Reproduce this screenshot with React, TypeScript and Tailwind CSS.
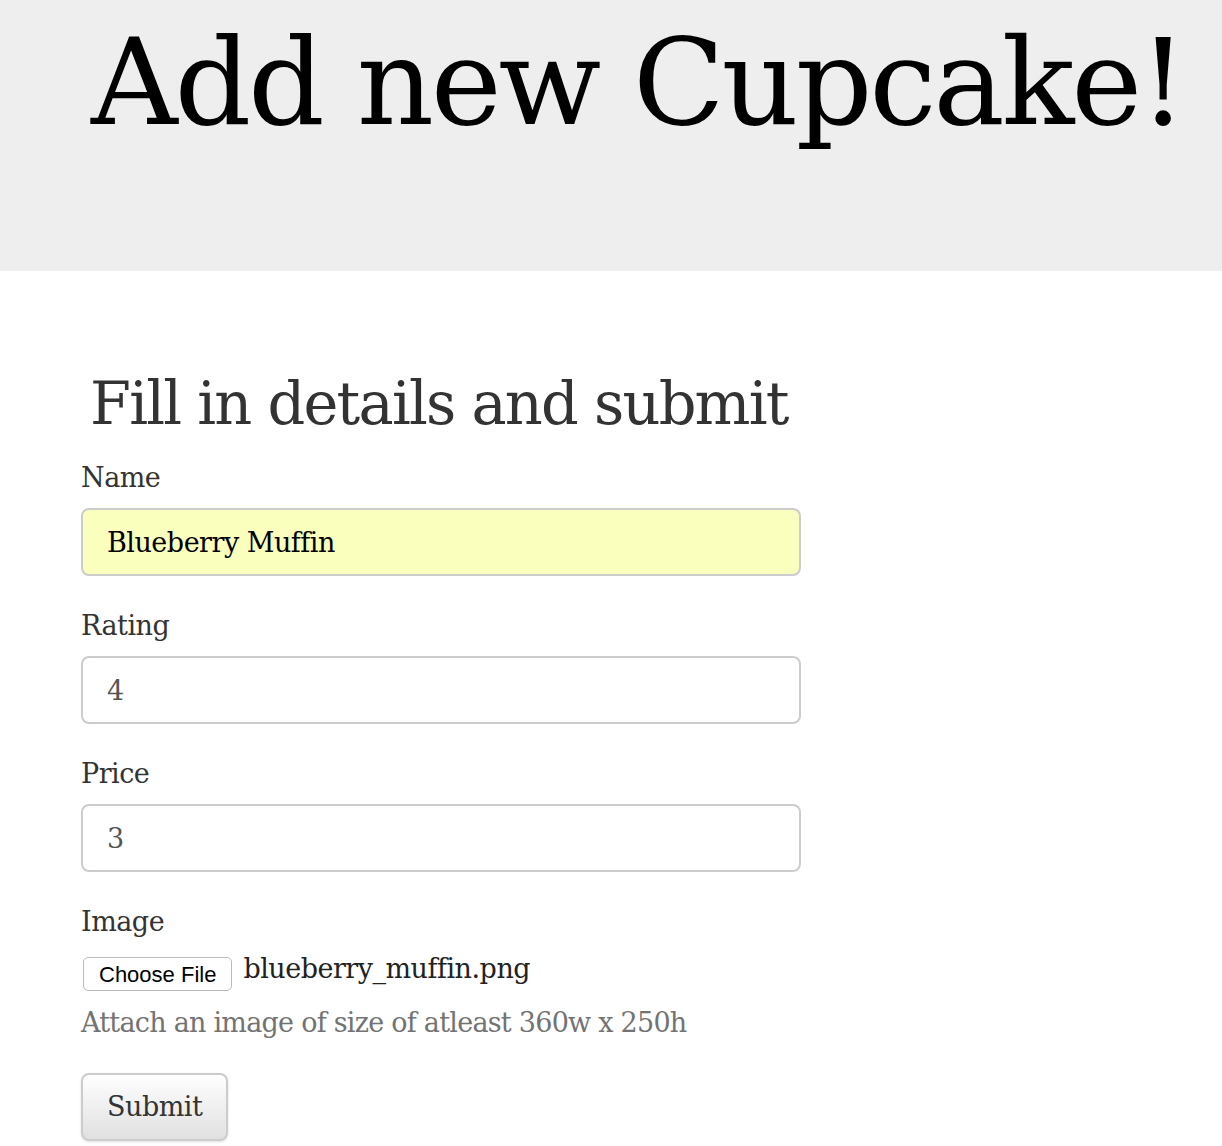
const serif = "font-['DejaVu_Serif',serif]";

function Field({ label, value, autofill }: { label: string; value: string; autofill?: boolean }) {
  return (
    <div className="mb-[30px]">
      <label className="block text-[27px] tracking-[-0.5px] leading-[40px] mb-[10px] text-[#333]">{label}</label>
      <input
        readOnly
        value={value}
        className={`block w-[720px] h-[68px] px-[24px] text-[27px] tracking-[-0.5px] border-2 border-[#ccc] rounded-[8px] outline-none ${serif} ${
          autofill ? 'bg-[#faffbd] text-black' : 'bg-white text-[#555]'
        }`}
      />
    </div>
  );
}

export default function App() {
  return (
    <div className={`min-h-[1146px] bg-white ${serif}`}>
      <header className="h-[271px] bg-[#eee] pl-[91px] pt-[13px]">
        <h1 className="text-[120px] leading-[140px] tracking-[-3.2px] whitespace-nowrap text-black">Add new Cupcake!</h1>
      </header>

      <main className="pl-[81px] pt-[100px]">
        <h2 className="pl-[9px] text-[59px] leading-[66px] tracking-[-1.8px] font-light text-[#333] mb-[21px]">Fill in details and submit</h2>

        <form className="w-[722px]">
          <Field label="Name" value="Blueberry Muffin" autofill />
          <Field label="Rating" value="4" />
          <Field label="Price" value="3" />

          <div className="mb-[30px]">
            <label className="block text-[27px] tracking-[-0.5px] leading-[40px] mb-[15px] text-[#333]">Image</label>
            <div className="flex items-center gap-[11px]">
              <span className="ml-[2px] px-[15px] h-[34px] flex items-center border border-[#bbb] rounded-[5px] bg-white font-['Liberation_Sans',sans-serif] text-[22px] text-black">
                Choose File
              </span>
              <span className="text-[27px] tracking-[-0.5px] text-[#222] -mt-[10px]">blueberry_muffin.png</span>
            </div>
            <p className="text-[27px] tracking-[-0.75px] leading-[40px] text-[#737373] mt-[12px]">Attach an image of size of atleast 360w x 250h</p>
          </div>

          <button
            type="button"
            className={`h-[68px] px-[24px] text-[27px] tracking-[-0.5px] text-[#333] border-2 border-[#ccc] rounded-[8px] bg-gradient-to-b from-white to-[#e0e0e0] shadow-sm ${serif}`}
          >
            Submit
          </button>
        </form>
      </main>
    </div>
  );
}
